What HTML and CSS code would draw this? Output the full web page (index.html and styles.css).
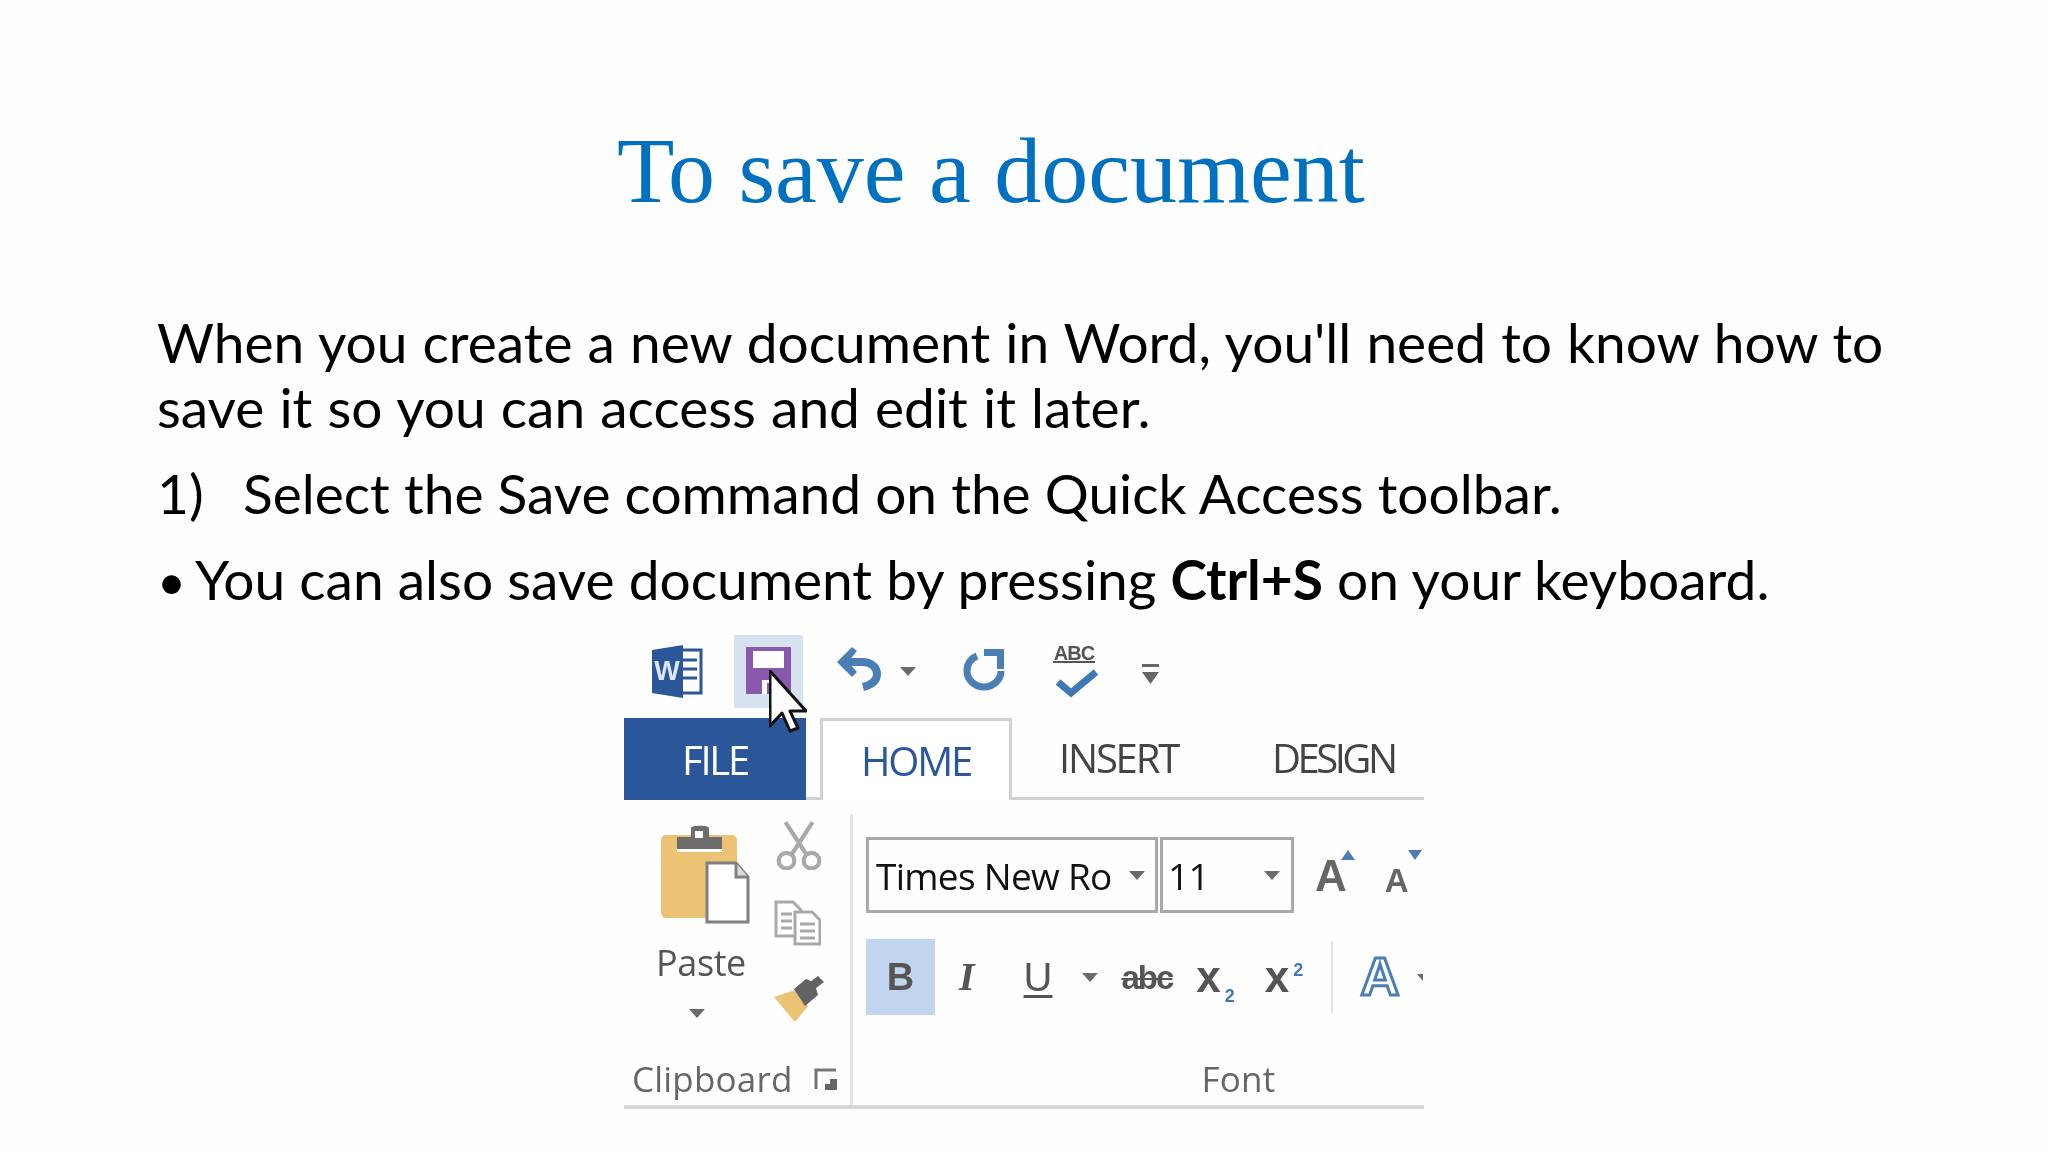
FILE: index.html
```html
<!DOCTYPE html>
<html lang="en">
<head>
<meta charset="utf-8">
<title>To save a document</title>
<link rel="stylesheet" href="styles.css">
</head>
<body>
<main class="slide">
  <h1 class="title">To save a document</h1>
  <p class="para intro">When you create a new document in Word, you'll need to know how to save it so you can access and edit it later.</p>
  <p class="para step"><span class="step-num">1)</span>Select the Save command on the Quick Access toolbar.</p>
  <p class="para tip"><span class="bullet">•</span>You can also save document by pressing <b>Ctrl+S</b> on your keyboard.</p>

  <section class="ribbon">
    <div class="qat">
      <svg class="i-word" viewBox="0 0 51 53"><path fill="#fff" stroke="#2b579a" stroke-width="3" d="M27 5H49V48H27z"/><path fill="#2b579a" d="M0 5 31 0V53L0 48z"/><path stroke="#2b579a" stroke-width="3" d="M30 15H45M30 24H45M30 33H45"/><text x="15" y="35" class="word-w">W</text></svg>
      <div class="save-btn">
        <svg class="i-save" viewBox="0 0 45 47"><path fill="#8a58ac" d="M0 0H45V47H0z"/><path fill="#fff" d="M7 4H38V21H7zM16 33H32V47H16z"/><path fill="#8a58ac" d="M21 36H26V47H21z"/></svg>
      </div>
      <svg class="i-undo" viewBox="0 0 46 44"><path fill="none" stroke="#4a7fb5" stroke-width="8" d="M8 15H25C34 15 40 20 40 27S34 38 26 40"/><path fill="#4a7fb5" d="M15 0 20 4 11 15 20 25 15 30 0 15z"/></svg>
      <svg class="i-drop d-undo" viewBox="0 0 16 9"><path d="M0 0H16L8 9z"/></svg>
      <svg class="i-redo" viewBox="0 0 42 44"><path fill="none" stroke="#4a7fb5" stroke-width="7" d="M14 9C7 12 4 18 4 24 4 33 12 40 21 40S38 33 38 24"/><path fill="#4a7fb5" d="M21 2H41V22H34V9H21z"/></svg>
      <svg class="i-spell" viewBox="0 -5 46 59"><text x="21" y="16" class="spell-abc">ABC</text><path fill="#555" d="M0 17H42V19H0z"/><path fill="none" stroke="#3f78b5" stroke-width="7" d="M5 38 18 49 43 28"/></svg>
      <svg class="i-more" viewBox="0 0 17 20"><path fill="#666" d="M0 0H17V3H0zM0 8H17L8.500 20z"/></svg>
    </div>

    <div class="tabs">
      <div class="tab tab-file">FILE</div>
      <div class="tab-gap"></div>
      <div class="tab tab-home">HOME</div>
      <div class="tab tab-insert">INSERT</div>
      <div class="tab tab-design">DESIGN</div>
      <div class="tab-gap tab-fill"></div>
    </div>

    <div class="groups">
      <div class="group clip">
        <div class="clip-main">
          <div class="paste-col">
            <svg class="i-paste" viewBox="0 0 89 99"><rect x="0" y="10" width="76" height="83" rx="5" fill="#ecc274"/><path fill="#fff" d="M16 19H61V27H16z"/><path fill="#6d6d6d" d="M16 12H30V3C30 0 48 0 48 3V12H61V24H16z"/><rect x="34" y="6" width="8" height="7" fill="#fff"/><path fill="#fff" stroke="#808080" stroke-width="3" d="M46 38H75L87 52V97H46z"/><path fill="#ddd" stroke="#808080" stroke-width="3" d="M75 38V52H87"/></svg>
            <span class="paste-label">Paste</span>
            <svg class="i-drop d-paste" viewBox="0 0 16 9"><path d="M0 0H16L8 9z"/></svg>
          </div>
          <div class="tool-col">
            <svg class="i-cut" viewBox="0 0 44 48"><g fill="none" stroke="#a9a9a9" stroke-width="4"><path d="M9 2 29 33M35 2 15 33"/><circle cx="10" cy="39" r="7.500"/><circle cx="34" cy="39" r="7.500"/></g></svg>
            <svg class="i-copy" viewBox="0 0 47 46"><g fill="#fff" stroke="#a9a9a9" stroke-width="3"><path d="M2 2H19L27 10V36H2z"/><path d="M21 12H38L46 20V44H21z"/></g><path stroke="#a9a9a9" stroke-width="3" d="M7 14H18M7 21H18M7 28H18M26 24H41M26 31H41M26 38H41"/></svg>
            <svg class="i-brush" viewBox="0 0 50 46"><path fill="#ecc274" d="M0 21 21 14 34 30 21 46C14 38 7 29 0 21z"/><path fill="#626262" d="M20 13 32 3 39 6 32 9 44 0 50 6 42 12 44 19 31 30z"/></svg>
          </div>
        </div>
        <div class="clip-foot">
          <span class="group-label">Clipboard</span>
          <svg class="i-launch" viewBox="0 0 23 22"><path fill="none" stroke="#777" stroke-width="3" d="M22 2H2V21"/><path fill="#666" d="M11 11H23V22H11z"/><path fill="#fff" d="M11 11H16V16H11z"/></svg>
        </div>
      </div>

      <div class="group font">
        <div class="font-row-a">
          <div class="combo combo-name"><span class="combo-text">Times New Ro</span><svg class="i-drop" viewBox="0 0 16 9"><path d="M0 0H16L8 9z"/></svg></div>
          <div class="combo combo-size"><span class="combo-text">11</span><svg class="i-drop" viewBox="0 0 16 9"><path d="M0 0H16L8 9z"/></svg></div>
          <div class="grow-a">
            <span class="a-big">A</span>
            <svg class="tri" viewBox="0 0 14 10"><path fill="#4a7fb5" d="M7 0 14 10H0z"/></svg>
          </div>
          <div class="shrink-a">
            <span class="a-small">A</span>
            <svg class="tri tri-down" viewBox="0 0 14 10"><path fill="#4a7fb5" d="M0 0H14L7 10z"/></svg>
          </div>
        </div>
        <div class="font-row-b">
          <span class="fmt fmt-b">B</span>
          <span class="fmt fmt-i">I</span>
          <span class="fmt fmt-u">U</span>
          <svg class="i-drop d-u" viewBox="0 0 16 9"><path d="M0 0H16L8 9z"/></svg>
          <span class="fmt fmt-s">abc</span>
          <span class="fmt fmt-x">x<sub class="sb">2</sub></span>
          <span class="fmt fmt-x fmt-xs">x<sup class="sp">2</sup></span>
          <span class="fmt-div"></span>
          <svg class="i-effect" viewBox="0 -6 44 68"><text x="22" y="46" class="effect-a">A</text></svg>
          <svg class="i-drop d-effect" viewBox="0 0 6 7"><path d="M0 0H6V7z"/></svg>
        </div>
        <div class="font-foot"><span class="group-label">Font</span></div>
      </div>
    </div>
    <svg class="cursor" viewBox="0 0 38 63"><path fill="#fff" stroke="#111" stroke-width="3" stroke-linejoin="round" d="M1 1V56L13 43 21 61 29 58 21 41H37z"/></svg>
  </section>
</main>
</body>
</html>
```
FILE: styles.css
```css
* { box-sizing: border-box; }
html, body { margin: 0; background: #fefefe; }
.slide { width: 2048px; height: 1152px; overflow: hidden; padding-top: 120px; color: #000; font-family: Lato, "Open Sans", sans-serif; }
.title { margin: 0 0 0 -66px; text-align: center; font: 400 94px/100px "Liberation Serif", serif; color: #0070c0; }
.para { margin: 0 0 0 157px; width: 1780px; font-size: 55.06px; line-height: 65px; }
.intro { margin-top: 90px; word-spacing: 1px; }
.step { margin-top: 21px; }
.tip { margin-top: 21px; }
.step-num { display: inline-block; width: 86px; }
.bullet { display: inline-block; width: 38px; font-size: 50px; line-height: 1; }
.tip b { font-weight: 700; }

.ribbon { position: relative; width: 800px; margin: 23px 0 0 624px; font-family: "Open Sans", sans-serif; color: #444; filter: blur(0.5px); }
.qat { display: flex; align-items: flex-start; height: 83px; }
.i-word { width: 51px; height: 53px; margin: 10px 31px 0 28px; }
.word-w { font: 700 27px "Liberation Sans", sans-serif; fill: #dfe8f2; text-anchor: middle; }
.save-btn { display: flex; justify-content: center; align-items: center; width: 69px; height: 73px; background: #d6e2f0; }
.i-save { width: 45px; height: 47px; margin-top: -2px; }
.i-undo { width: 46px; height: 44px; margin: 12px 0 0 34px; }
.i-drop { display: block; flex: none; width: 16px; height: 9px; fill: #6b6b6b; }
.d-undo { margin: 32px 0 0 17px; }
.i-redo { width: 46px; height: 44px; margin: 12px 0 0 45px; }
.i-spell { width: 46px; height: 59px; margin: 4px 0 0 46px; }
.spell-abc { font: 700 20px "Liberation Sans", sans-serif; fill: #555; text-anchor: middle; letter-spacing: -1px; }
.i-more { width: 17px; height: 20px; margin: 29px 0 0 43px; }

.tabs { display: flex; height: 82px; }
.tab { display: flex; align-items: center; font-size: 40px; letter-spacing: -2.2px; color: #444; border-bottom: 3px solid #d2d2d2; }
.tab-file { justify-content: center; width: 182px; background: #2b579a; color: #fff; border-bottom: 0; }
.tab-gap { width: 14px; border-bottom: 3px solid #d2d2d2; }
.tab-home { justify-content: center; width: 192px; color: #2b579a; background: #fff; border: 3px solid #d2d2d2; border-bottom: 0; }
.tab-insert { width: 260px; padding-left: 47px; }
.tab-design { width: 140px; letter-spacing: -3.5px; }
.tab-fill { flex: 1; width: auto; }

.groups { display: flex; height: 309px; border-bottom: 4px solid #d6d6d6; }
.group-label { font-size: 35px; letter-spacing: 0.2px; color: #666; line-height: 40px; }
.clip { flex: none; width: 229px; border-right: 3px solid #e4e4e4; height: 291px; margin-top: 14px; }
.clip-main { display: flex; height: 245px; }
.paste-col { display: flex; flex-direction: column; align-items: center; width: 150px; padding: 11px 0 0 4px; }
.i-paste { width: 89px; height: 99px; margin-left: 8px; }
.paste-label { margin-top: 14px; font-size: 36px; line-height: 50px; letter-spacing: -0.4px; color: #555; }
.d-paste { margin-top: 21px; margin-left: -8px; }
.tool-col { display: flex; flex-direction: column; align-items: center; width: 50px; padding-top: 6px; }
.i-cut { width: 46px; height: 50px; }
.i-copy { width: 47px; height: 46px; margin: 30px 0 0 -4px; }
.i-brush { width: 50px; height: 46px; margin-top: 30px; }
.clip-foot { display: flex; align-items: center; justify-content: space-between; padding: 0 13px 0 8px; }
.i-launch { width: 23px; height: 22px; }

.font { flex: 1; padding: 37px 0 0 13px; }
.font-row-a { display: flex; align-items: flex-start; height: 102px; }
.combo { display: flex; flex: none; align-items: center; justify-content: space-between; height: 76px; border: 3px solid #a9a9a9; font-size: 37px; color: #111; white-space: nowrap; }
.combo-text { letter-spacing: -0.7px; }
.combo-name { width: 292px; padding: 0 10px 0 7px; }
.combo-size { width: 134px; margin-left: 2px; padding: 0 11px 0 5px; }
.grow-a, .shrink-a { display: flex; flex: none; align-items: flex-start; color: #666; font-family: "Liberation Sans", sans-serif; font-weight: 700; }
.grow-a { margin: 13px 0 0 21px; }
.shrink-a { margin: 13px 0 0 30px; }
.a-big { font-size: 44px; line-height: 52px; }
.a-small { font-size: 33px; line-height: 52px; margin-top: 5px; }
.tri { width: 14px; height: 10px; margin: 0 0 0 -6px; }
.tri-down { margin-left: -1px; }
.font-row-b { display: flex; align-items: center; height: 76px; white-space: nowrap; }
.fmt { flex: none; font-family: "Liberation Sans", sans-serif; font-weight: 700; font-size: 40px; color: #555; line-height: 1; }
.fmt-b { display: flex; align-items: center; justify-content: center; width: 69px; height: 76px; background: #c1d5ee; font-size: 38px; }
.fmt-i { margin-left: 24px; font-family: "Liberation Serif", serif; font-style: italic; }
.fmt-u { margin-left: 49px; text-decoration: underline; text-underline-offset: 4px; text-decoration-thickness: 3px; font-weight: 400; }
.d-u { margin-left: 30px; }
.fmt-s { margin-left: 23px; font-size: 33px; letter-spacing: -2px; text-decoration: line-through; text-decoration-thickness: 2px; }
.fmt-x { margin-left: 24px; font-size: 44px; }
.fmt-xs { margin-left: 30px; }
.sb, .sp { font-size: 18px; color: #3f78b5; margin-left: 4px; line-height: 0; }
.fmt-div { flex: none; width: 2px; height: 72px; margin-left: 28px; background: #e2e2e2; }
.i-effect { flex: none; width: 44px; height: 68px; margin-left: 25px; }
.effect-a { font: 700 54px "Liberation Sans", sans-serif; fill: #fff; stroke: #4a7fb5; stroke-width: 3px; text-anchor: middle; }
.d-effect { width: 6px; height: 7px; margin-left: 15px; }
.font-foot { display: flex; justify-content: center; padding: 44px 0 0 187px; }
.cursor { position: absolute; left: 145px; top: 35px; width: 38px; height: 63px; }
```
